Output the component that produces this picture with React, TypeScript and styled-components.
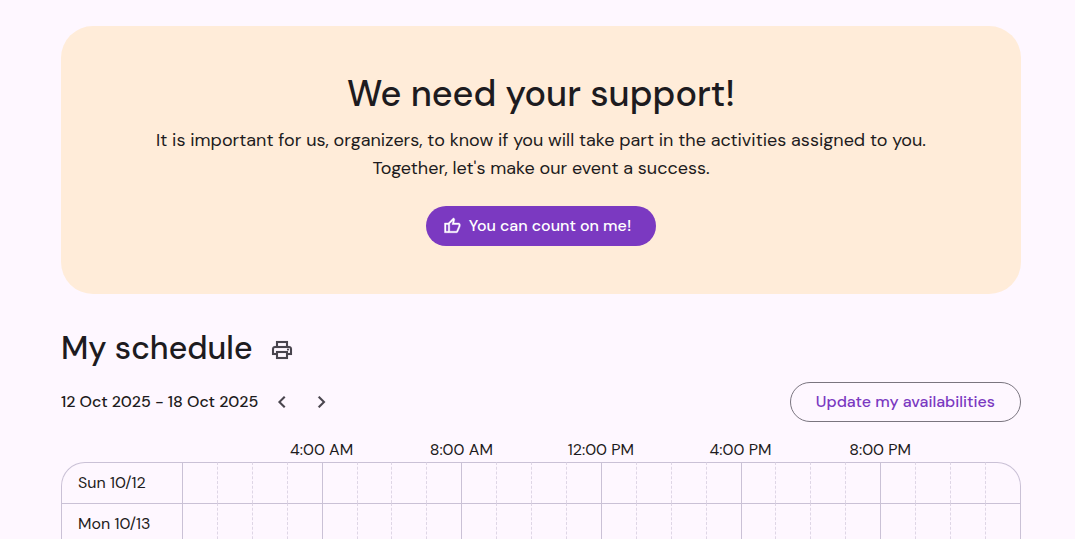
import React from 'react';
import styled, { createGlobalStyle } from 'styled-components';

const GlobalStyle = createGlobalStyle`
  * { box-sizing: border-box; }
  body {
    margin: 0;
    background: #fef7ff;
    color: #1d1b20;
    font-family: "DM Sans", Inter, sans-serif;
    font-size: 16px;
    line-height: 24px;
  }
  button { font: inherit; cursor: pointer; }
`;

const Page = styled.main`
  height: 100vh;
  overflow: hidden;
  padding: 26px 54px 0 61px;
`;

const Banner = styled.section`
  display: flex;
  flex-direction: column;
  align-items: center;
  padding: 48px;
  border-radius: 32px;
  background: #ffecd9;
  text-align: center;
`;

const BannerTitle = styled.h1`
  margin: 0 0 12px;
  font-size: 36px;
  font-weight: 500;
  line-height: 40px;
`;

const BannerText = styled.p`
  margin: 0 0 24px;
  font-size: 18px;
  line-height: 28px;
`;

const PillButton = styled.button<{ $filled?: boolean }>`
  display: inline-flex;
  align-items: center;
  gap: 8px;
  height: 40px;
  padding: ${(p) => (p.$filled ? '0 25px 0 17px' : '0 25px')};
  border: ${(p) => (p.$filled ? 'none' : '1px solid #7a757f')};
  border-radius: 20px;
  background: ${(p) => (p.$filled ? '#7b39c1' : 'transparent')};
  color: ${(p) => (p.$filled ? '#ffffff' : '#7b39c1')};
  font-weight: 500;
`;

const IconButton = styled.button`
  display: grid;
  place-items: center;
  width: 40px;
  height: 40px;
  padding: 0;
  border: none;
  background: transparent;
  color: #49454e;
`;

const TitleRow = styled.div`
  display: flex;
  align-items: flex-start;
  gap: 10px;
  margin-top: 36px;
`;

const SectionTitle = styled.h2`
  margin: 0;
  font-size: 32px;
  font-weight: 500;
  line-height: 36px;
`;

const Toolbar = styled.div`
  display: flex;
  align-items: center;
  justify-content: space-between;
  margin-top: 12px;
`;

const WeekPicker = styled.div`
  display: flex;
  align-items: center;
`;

const WeekRange = styled.span`
  margin-right: 4px;
  font-weight: 500;
`;

const Schedule = styled.table`
  width: 100%;
  margin-top: 16px;
  border-collapse: separate;
  border-spacing: 0;
  table-layout: fixed;
`;

const DayColumn = styled.col`
  width: 121px;
`;

const LastHourColumn = styled.col`
  width: 36px;
`;

const HourLabel = styled.th`
  height: 24px;
  padding: 0;
  font-weight: 400;
  text-align: center;
`;

const DayRow = styled.tr`
  height: 41px;
  &:first-child > :first-child { border-top-left-radius: 24px; }
  &:first-child > :last-child { border-top-right-radius: 24px; }
  & > :last-child { border-right: 1px solid #cac1d6; }
`;

const DayName = styled.th`
  padding: 0 16px;
  border-top: 1px solid #cac1d6;
  border-left: 1px solid #cac1d6;
  font-weight: 400;
  text-align: left;
`;

const HourCell = styled.td<{ $major: boolean }>`
  padding: 0;
  border-top: 1px solid #cac1d6;
  border-left: ${(p) => (p.$major ? '1px solid #cac1d6' : '1px dashed #dfd6e6')};
`;

const Glyph = styled.svg<{ $bold?: boolean }>`
  fill: currentColor;
  stroke: currentColor;
  stroke-width: ${(p) => (p.$bold ? 20 : 4)};
`;

const icons = {
  thumb:
    'M720-120H280v-520l280-280 50 50q7 7 11.5 19t4.5 23v14l-44 174h258q32 0 56 24t24 56v80q0 7-2 15t-4 15L794-168q-9 20-30 34t-44 14Zm-360-80h360l120-280v-80H480l54-220-174 174v406Zm-80-440v80H160v360h120v80H80v-520h200Z',
  print:
    'M640-640v-120H320v120h-80v-200h480v200h-80ZM720-460q17 0 28.5-11.5T760-500q0-17-11.5-28.5T720-540q-17 0-28.5 11.5T680-500q0 17 11.5 28.5T720-460Zm-80 260v-160H320v160h320Zm80 80H240v-160H80v-240q0-51 35-85.5t85-34.5h560q51 0 85.5 34.5T880-520v240H720v160Zm80-240v-160q0-17-11.5-28.5T760-560H200q-17 0-28.5 11.5T160-520v160h80v-80h480v80h80Z',
  previous: 'M560-240 320-480l240-240 56 56-184 184 184 184-56 56Z',
  next: 'M504-480 320-664l56-56 240 240-240 240-56-56 184-184Z',
};

interface IconProps {
  name: keyof typeof icons;
  size?: number;
  bold?: boolean;
}

const Icon = ({ name, size = 24, bold }: IconProps) => (
  <Glyph $bold={bold} width={size} height={size} viewBox="0 -960 960 960" aria-hidden="true">
    <path d={icons[name]} />
  </Glyph>
);

const hourLabels = ['4:00 AM', '8:00 AM', '12:00 PM', '4:00 PM', '8:00 PM'];
const days = ['Sun 10/12', 'Mon 10/13'];
const hours = Array.from({ length: 24 }, (_, hour) => hour);

export default function App() {
  return (
    <Page>
      <GlobalStyle />
      <Banner>
        <BannerTitle>We need your support!</BannerTitle>
        <BannerText>
          It is important for us, organizers, to know if you will take part in the activities assigned to you.
          <br />
          Together, let's make our event a success.
        </BannerText>
        <PillButton type="button" $filled>
          <Icon name="thumb" size={18} bold />
          You can count on me!
        </PillButton>
      </Banner>

      <TitleRow>
        <SectionTitle>My schedule</SectionTitle>
        <IconButton type="button" aria-label="Print">
          <Icon name="print" />
        </IconButton>
      </TitleRow>

      <Toolbar>
        <WeekPicker>
          <WeekRange>12 Oct 2025 - 18 Oct 2025</WeekRange>
          <IconButton type="button" aria-label="Previous week">
            <Icon name="previous" />
          </IconButton>
          <IconButton type="button" aria-label="Next week">
            <Icon name="next" />
          </IconButton>
        </WeekPicker>
        <PillButton type="button">Update my availabilities</PillButton>
      </Toolbar>

      <Schedule>
        <colgroup>
          <DayColumn />
          <col span={23} />
          <LastHourColumn />
        </colgroup>
        <thead>
          <tr>
            <td colSpan={3} />
            {hourLabels.map((label) => (
              <HourLabel key={label} colSpan={4} scope="colgroup">
                {label}
              </HourLabel>
            ))}
            <td colSpan={2} />
          </tr>
        </thead>
        <tbody>
          {days.map((day) => (
            <DayRow key={day}>
              <DayName scope="row">{day}</DayName>
              {hours.map((hour) => (
                <HourCell key={hour} $major={hour % 4 === 0} />
              ))}
            </DayRow>
          ))}
        </tbody>
      </Schedule>
    </Page>
  );
}
